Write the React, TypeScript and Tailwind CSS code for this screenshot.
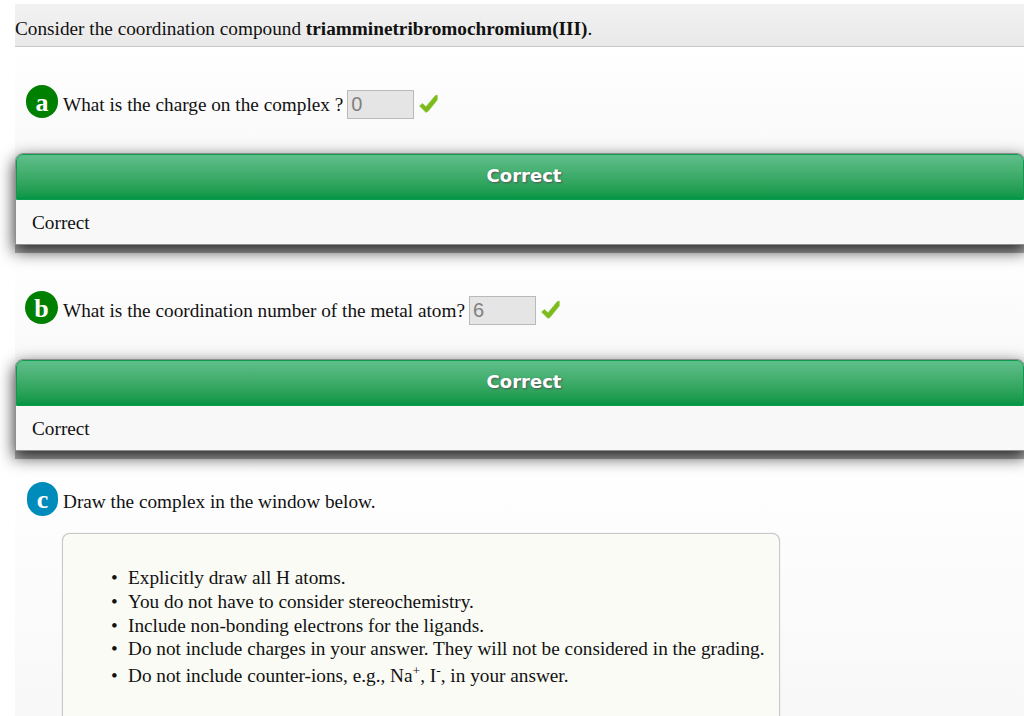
import type { ReactNode } from "react";

interface BadgeProps {
  readonly letter: string;
  readonly className: string;
}

function Badge({ letter, className }: BadgeProps) {
  return (
    <span
      className={`flex shrink-0 items-center justify-center rounded-full pt-[2px] text-[26px] leading-none font-bold text-white ${className}`}
    >
      {letter}
    </span>
  );
}

function CheckMark() {
  return (
    <svg className="ml-[5px] h-5 w-5 shrink-0" viewBox="0 0 20 20" aria-hidden="true">
      <path
        d="M0.6 12 L3.4 9.6 L7 12.8 L16.2 1.8 L18.2 1 L18.2 6 L8.8 17.6 L6.8 18.2 Z"
        fill="#7dbb1d"
        stroke="#8cc63a"
        strokeWidth="0.8"
        strokeLinejoin="round"
      />
    </svg>
  );
}

interface QuestionProps {
  readonly badge: ReactNode;
  readonly prompt: string;
  readonly value: string;
}

function Question({ badge, prompt, value }: QuestionProps) {
  return (
    <section className="h-[206px] bg-linear-to-b from-white/10 to-[#f3f3f3]">
      <div className="flex h-[106px] items-center pt-[8px]">
        {badge}
        <span className="pt-[2px] whitespace-nowrap">{prompt}</span>
        <input
          className="ml-[4px] h-[29px] w-[67px] border border-[#b9b9b9] bg-[#e5e5e5] px-[3px] font-['Liberation_Sans',sans-serif] text-[20px] text-[#808080]"
          value={value}
          disabled
        />
        <CheckMark />
      </div>
      <div className="h-[92px] w-[1010px] rounded-t-[8px] border border-[#8f8f8f] bg-[#f8f8f8] shadow-[0_8px_0_rgba(0,0,0,0.25),0_6px_16px_1px_#3a3a3a]">
        <div className="flex h-[46px] items-center justify-center rounded-t-[7px] border border-[#0d9c4e] bg-linear-to-b from-[#5fbf8b] to-[#009645] pb-[2px] pl-[8px] font-['DejaVu_Sans',sans-serif] text-[18px] font-bold text-white [text-shadow:1px_1px_2px_#555]">
          Correct
        </div>
        <p className="px-[16px] pt-[11px]">Correct</p>
      </div>
    </section>
  );
}

export default function App() {
  return (
    <main className="h-[716px] w-[1024px] overflow-hidden bg-white pt-[4px] pl-[15px] font-['Liberation_Serif',serif] text-[19.25px] leading-[23.8px] text-[#111]">
      <header className="h-[43px] border-b border-[#c8c8c8] bg-linear-to-b from-[#f2f2f2] to-[#e9e9e9] pt-[13px]">
        Consider the coordination compound <strong>triamminetribromochromium(III)</strong>.
      </header>

      <Question
        badge={<Badge letter="a" className="mr-[5px] mb-[5px] ml-[11px] h-[33px] w-[32px] bg-[#008000]" />}
        prompt="What is the charge on the complex ?"
        value="0"
      />
      <Question
        badge={<Badge letter="b" className="mr-[5px] mb-[5px] ml-[10px] h-[33px] w-[33px] bg-[#008000]" />}
        prompt="What is the coordination number of the metal atom?"
        value="6"
      />

      <section className="h-[420px] bg-linear-to-b from-white/10 to-[#f3f3f3] pt-[22px]">
        <div className="flex h-[40px] items-center">
          <Badge letter="c" className="mr-[5px] mb-[5px] ml-[12px] h-[34px] w-[31px] bg-[#008cba]" />
          <span className="pt-[2px]">Draw the complex in the window below.</span>
        </div>
        <div className="mt-[12px] ml-[47px] h-[300px] w-[718px] rounded-[8px] border border-[#c9c9c9] bg-[#fafbf5] pt-[32px] shadow-[0_0_1px_#bbb]">
          <ul className="pl-[48px] whitespace-nowrap [&>li]:before:inline-block [&>li]:before:w-[17px] [&>li]:before:leading-none [&>li]:before:content-['•']">
            <li>Explicitly draw all H atoms.</li>
            <li>You do not have to consider stereochemistry.</li>
            <li>Include non-bonding electrons for the ligands.</li>
            <li>Do not include charges in your answer. They will not be considered in the grading.</li>
            <li className="pt-[3px]">
              Do not include counter-ions, e.g., Na<sup className="top-[-7px] text-[13.5px]">+</sup>, I
              <sup className="top-[-7px] text-[13.5px]">-</sup>, in your answer.
            </li>
          </ul>
        </div>
      </section>
    </main>
  );
}
